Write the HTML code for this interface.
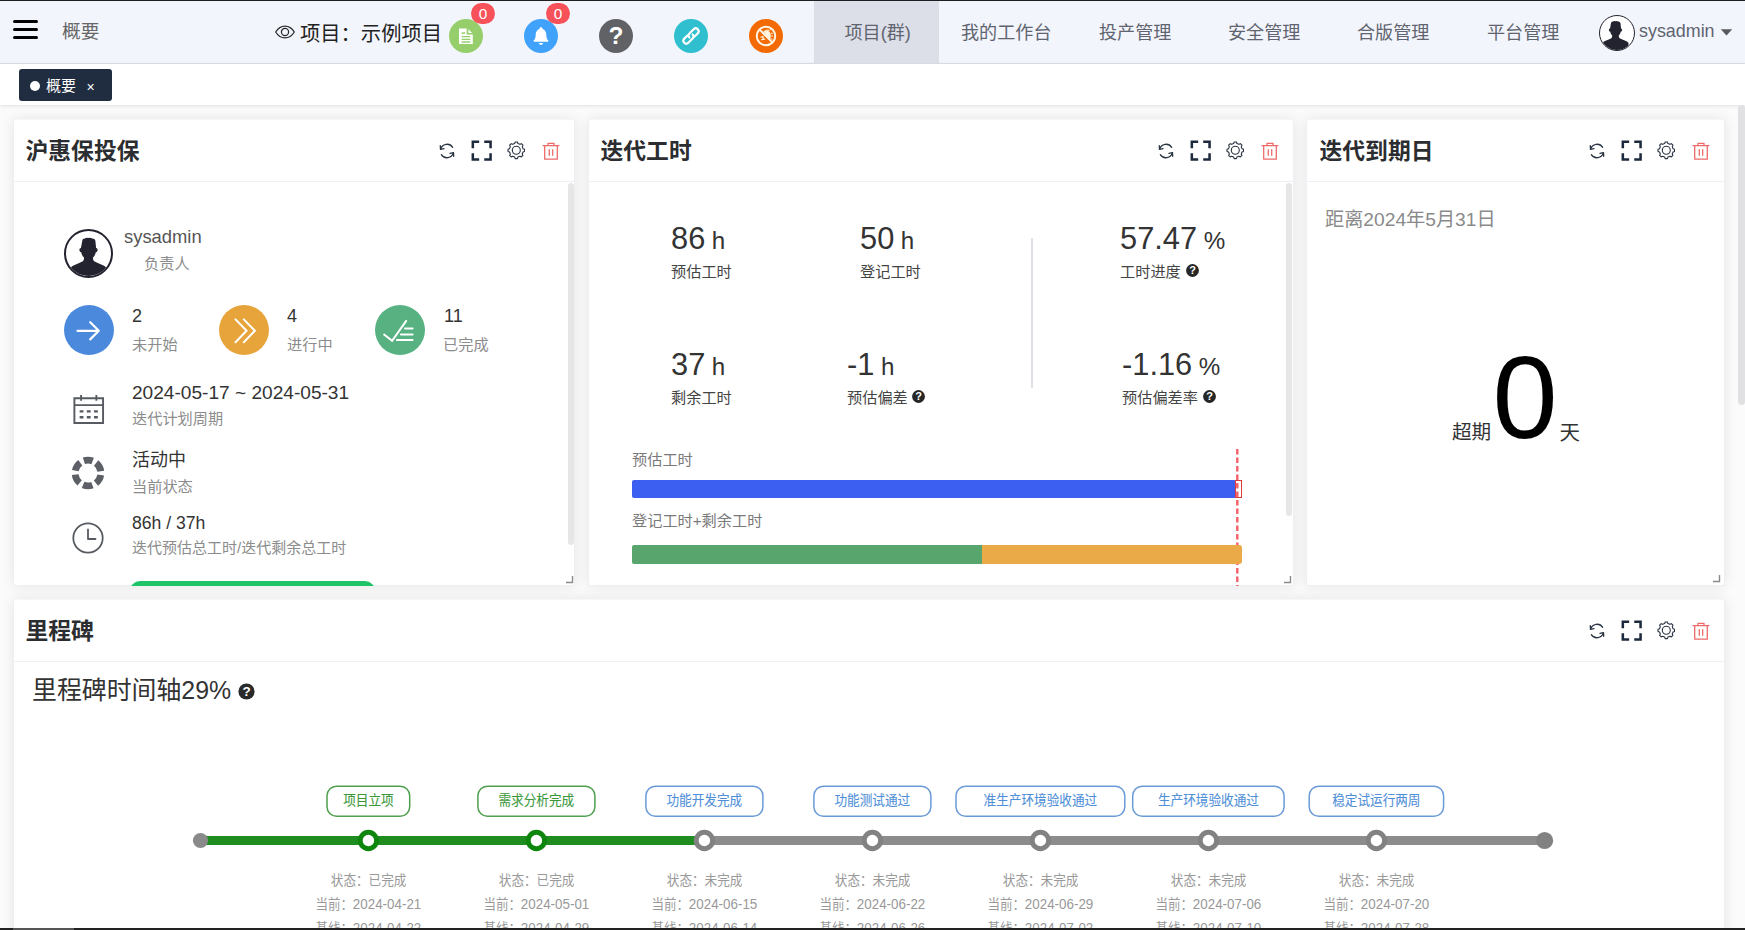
<!DOCTYPE html>
<html lang="zh-CN">
<head>
<meta charset="utf-8">
<title>概要</title>
<style>
*{box-sizing:border-box;margin:0;padding:0}
html,body{width:1745px;height:930px;overflow:hidden}
body{position:relative;background:#fbfbfb;font-family:"Liberation Sans","Noto Sans CJK SC",sans-serif;color:#333;-webkit-font-smoothing:antialiased}
.abs{position:absolute}
.t{position:absolute;white-space:nowrap;line-height:1}
#topline{left:0;top:0;width:1745px;height:1px;background:#1f1f22;z-index:50}
#botline{left:0;top:928px;width:1745px;height:2px;background:#222;z-index:50}
#botthumb{left:13px;top:928px;width:61px;height:2px;background:#555;z-index:51}
/* header */
#hdr{left:0;top:1px;width:1745px;height:62px;background:#f2f5fc}
#hdrline{left:0;top:63px;width:1745px;height:1px;background:#dfe1e6}
#tabbar{left:0;top:64px;width:1745px;height:41px;background:#fff;box-shadow:0 1px 4px rgba(0,21,41,.12)}
.bar{position:absolute;left:13px;width:25px;height:3.4px;border-radius:2px;background:#000}
#navact{left:814px;top:1px;width:125px;height:62px;background:#dcdfe8}
.nav{font-size:18.100px;color:#5f6470;top:23.500px}
.circ{position:absolute;width:34px;height:34px;border-radius:50%;top:19px}
.badge{position:absolute;width:24px;height:21.4px;border-radius:10.7px;background:#f7525a;color:#fff;font-size:15.400px;line-height:21.400px;text-align:center;top:2.8px}
#chip{left:19px;top:69px;width:93px;height:32px;border-radius:3px;background:#202d40}
/* cards */
.card{position:absolute;background:#fff;border-radius:3px;box-shadow:inset 1px 0 0 #edeff4,inset -1px 0 0 #edeff4,inset 0 -1px 0 #edeff4,inset 0 1px 0 #f6f7fa;overflow:hidden}
.cs{position:absolute;border-radius:3px;box-shadow:0 0 14px rgba(0,0,0,.09)}
.chead{position:absolute;left:0;top:0;right:0;height:63px;border-bottom:1px solid #eff0f4}
.ctitle{position:absolute;left:12.500px;top:20.500px;font-size:22.800px;font-weight:700;color:#2b2d30;line-height:1;white-space:nowrap}
.ico{position:absolute;top:22px;width:20px;height:20px}
#pgthumb{left:1738px;top:105px;width:7px;height:300px;background:#e1e1e4;border-radius:4px}
.sb{position:absolute;width:6px;border-radius:3px;background:#e6e6e6}
.lbl{position:absolute;white-space:nowrap;line-height:1;font-size:15.200px;color:#8c8c8c}
.lbl.k{color:#444;font-size:15.200px}
.val{position:absolute;white-space:nowrap;line-height:1;color:#333}
.gray{color:#8a8a8a}
.rh{position:absolute;width:10px;height:10px}
</style>
</head>
<body>
<div class="abs" id="topline"></div>
<div class="cs" style="left:13px;top:119px;width:562px;height:467px"></div>
<div class="cs" style="left:588px;top:119px;width:706px;height:467px"></div>
<div class="cs" style="left:1306px;top:119px;width:419px;height:467px"></div>
<div class="cs" style="left:13px;top:599px;width:1712px;height:340px"></div>
<div class="abs" id="hdr"></div>
<div class="abs" id="hdrline"></div>
<div class="abs" id="tabbar"></div>
<div class="abs" id="navact"></div>
<!-- hamburger -->
<div class="bar" style="top:20.1px"></div>
<div class="bar" style="top:27.8px"></div>
<div class="bar" style="top:35.5px"></div>
<span class="t" style="left:62px;top:23.200px;font-size:18.700px;color:#666">概要</span>
<!-- eye -->
<svg class="abs" style="left:274px;top:21.600px" width="22" height="20" viewBox="0 0 22 20"><path d="M1.700 10 C4.300 5.700 7.800 4.100 11 4.100 S17.700 5.700 20.300 10 C17.700 14.300 14.200 15.900 11 15.900 S4.300 14.300 1.700 10Z" fill="none" stroke="#2b2b2b" stroke-width="1.250"/><circle cx="11" cy="10" r="3.600" fill="none" stroke="#2b2b2b" stroke-width="1.250"/></svg>
<span class="t" style="left:300px;top:23.500px;font-size:20.300px;color:#222">项目：示例项目</span>
<!-- circles -->
<div class="circ" style="left:449px;background:#95ce6b"></div>
<svg class="abs" style="left:458px;top:28px" width="16" height="17" viewBox="0 0 16 17"><path d="M1 0.5H9.2L14.8 6V16H1Z" fill="#fff"/><path d="M9.2 0.5V6H14.8Z" fill="#95ce6b" stroke="#95ce6b" stroke-width="1.2"/><path d="M10.4 1.2L14.2 5H10.4Z" fill="#fff"/><path d="M3.6 5H7.2M3.6 8.6H12.2M3.6 11.4H12.2M3.6 14H12.2" stroke="#95ce6b" stroke-width="1.4"/></svg>
<div class="badge" style="left:471px">0</div>
<div class="circ" style="left:524px;background:#41a2fb"></div>
<svg class="abs" style="left:532px;top:26px" width="18" height="20" viewBox="0 0 18 20"><path d="M9 1.2c-.9 0-1.5.6-1.5 1.4v.5C5 3.9 3.7 6.100 3.700 8.700c0 3.200-.9 4.700-2 5.900-.3.400-.1 1.100.5 1.100h13.600c.6 0 .8-.7.500-1.100-1.100-1.200-2-2.700-2-5.900 0-2.600-1.300-4.800-3.800-5.600v-.5c0-.8-.6-1.400-1.500-1.400Z" fill="#fff"/><path d="M6.900 16.900h4.200c0 1.100-.9 1.900-2.100 1.900s-2.100-.8-2.100-1.900Z" fill="#fff"/></svg>
<div class="badge" style="left:546px">0</div>
<div class="circ" style="left:599px;background:#606266"></div>
<span class="t" style="left:608px;top:24.300px;font-size:24.500px;font-weight:700;color:#fff;width:16px;text-align:center">?</span>
<div class="circ" style="left:674px;background:#2fbfce"></div>
<svg class="abs" style="left:677px;top:22.400px" width="28" height="28" viewBox="-14 -14 28 28"><g transform="rotate(-45)" fill="none" stroke="#fff" stroke-width="2.200" stroke-linecap="round"><path d="M-2.100 -2.900H-6.650A2.900 2.900 0 0 0 -6.650 2.900H-0.650A2.900 2.900 0 0 0 2.250 0"/><path d="M2.100 2.900H6.650A2.900 2.900 0 0 0 6.650 -2.900H0.650A2.900 2.900 0 0 0 -2.250 0"/></g></svg>
<div class="circ" style="left:749px;background:#f46a02"></div>
<svg class="abs" style="left:754px;top:24px" width="24" height="24" viewBox="0 0 24 24"><circle cx="12" cy="12" r="9.250" fill="none" stroke="#fff6e6" stroke-width="2"/><path d="M9.500 7.500c1-1.500 3.600-1.700 5.200-.6 1.600 1.100 2.300 3.300 2.100 5.300-.1 1.500-.6 2.700-1.500 3.600Z" fill="#fff3dc"/><path d="M15.500 6.300l1.500-1M17 9.300h1.900M17.200 12h2M16.700 14.600l1.700.8M12.300 6.100h2.800" stroke="#fff3dc" stroke-width="1" fill="none"/><path d="M6.500 13.200l3.200-1M7.300 15.700l3.800-.6M8.600 13.100l1.300 2.600" stroke="#fff3dc" stroke-width="1.200" fill="none"/><path d="M5.400 5.400L18.600 18.600" stroke="#fff6e6" stroke-width="2"/></svg>
<!-- nav -->
<span class="t nav" style="left:844.500px">项目(群)</span>
<span class="t nav" style="left:961px">我的工作台</span>
<span class="t nav" style="left:1099px">投产管理</span>
<span class="t nav" style="left:1228px">安全管理</span>
<span class="t nav" style="left:1357px">合版管理</span>
<span class="t nav" style="left:1487px">平台管理</span>
<!-- avatar -->
<div class="abs" style="left:1598.700px;top:15.200px;width:36px;height:36px;border-radius:50%;border:1.800px solid #23232f;background:#fff;overflow:hidden"><svg class="abs" style="left:-2.500px;top:-2.500px" width="37" height="37" viewBox="0 0 37 37"><path d="M14 9.300Q14 7.600 15.800 7.600Q17 6.900 18.500 7.200Q20 6.900 21.200 7.600Q23.200 7.600 23.500 9.300L24 14.600Q25.300 14.800 25.100 16.200Q24.900 17.700 23.900 17.500Q23.300 20 21.800 21.400Q21.600 23.300 22.600 24.200Q26 26 29 27Q30.500 27.600 31.500 29V37H5.500V29Q6.500 27.600 8 27Q11 26 14.400 24.200Q15.400 23.300 15.200 21.400Q13.700 20 13.100 17.500Q12.100 17.700 11.900 16.200Q11.700 14.800 13 14.600Z" fill="#23232f"/></svg></div>
<span class="t" style="left:1639px;top:23.300px;font-size:17.900px;color:#5f6470">sysadmin</span>
<svg class="abs" style="left:1720px;top:28px" width="13" height="8" viewBox="0 0 13 8"><path d="M0.800 1.200H12.200L6.500 7.400Z" fill="#5a5a5e"/></svg>

<!-- CHIP -->
<div class="abs" id="chip"></div>
<div class="abs" style="left:30px;top:81px;width:10px;height:10px;border-radius:50%;background:#fff"></div>
<span class="t" style="left:46px;top:78px;font-size:15px;color:#fff">概要</span>
<span class="t" style="left:86.500px;top:80px;font-size:14px;color:#fff">×</span>
<!-- CARD1 -->
<div class="card" id="c1" style="left:13px;top:119px;width:562px;height:467px">
 <div class="chead"><span class="ctitle">沪惠保投保</span><svg class="ico" style="right:118px" width="20" height="20" viewBox="0 0 20 20" fill="none" stroke="#2a3442" stroke-width="1.3" stroke-linecap="round" stroke-linejoin="round"><path d="M3.6 8.300A6.700 6.700 0 0 1 15.700 6.300"/><path d="M16.400 11.700A6.700 6.700 0 0 1 4.300 13.700"/><path d="M3.300 4.700L3.500 8.400L7 7.600" /><path d="M16.700 15.300L16.500 11.600L13 12.400"/></svg>
<svg class="ico" style="right:81.700px;width:23.400px;height:23.400px;top:19.700px" viewBox="0 0 24 24" fill="none" stroke="#1d2a3d" stroke-width="2.600"><path d="M2.900 9.400V2.900H9.400M14.600 2.900H21.100V9.400M21.100 14.600V21.100H14.600M9.400 21.100H2.900V14.600"/></svg>
<svg class="ico" style="right:49.600px;top:22.300px;width:18.600px;height:18.600px" viewBox="0 0 20 20" fill="none" stroke="#2a3442" stroke-width="1.200" stroke-linejoin="round"><path d="M8.25 2.71 L8.80 1.08 L11.20 1.08 L11.75 2.71 L13.92 3.61 L15.46 2.85 L17.15 4.54 L16.39 6.08 L17.29 8.25 L18.92 8.80 L18.92 11.20 L17.29 11.75 L16.39 13.92 L17.15 15.46 L15.46 17.15 L13.92 16.39 L11.75 17.29 L11.20 18.92 L8.80 18.92 L8.25 17.29 L6.08 16.39 L4.54 17.15 L2.85 15.46 L3.61 13.92 L2.71 11.75 L1.08 11.20 L1.08 8.80 L2.71 8.25 L3.61 6.08 L2.85 4.54 L4.54 2.85 L6.08 3.61Z"/><circle cx="10" cy="10" r="4.300"/></svg>
<svg class="ico" style="right:14.200px;top:22px" width="20" height="20" viewBox="0 0 20 20" fill="none" stroke="#ee6a6a" stroke-width="1.300" stroke-linejoin="round"><path d="M1.600 4.700H18.400M7 4.500V2.400H13V4.500M3.700 4.900V18.200H16.300V4.900M8.300 8.300V14.700M11.700 8.300V14.700"/></svg>
</div>
 <div class="sb" style="left:555px;top:64px;height:362px"></div>
 <!-- avatar -->
 <div class="abs" style="left:50.600px;top:109.600px;width:49.900px;height:49.900px;border-radius:50%;border:2.070px solid #23232f;background:#fff;overflow:hidden"><svg class="abs" style="left:-2.690px;top:-2.690px" width="51" height="51" viewBox="0 0 37 37"><path d="M14 9.300Q14 7.600 15.800 7.600Q17 6.900 18.500 7.200Q20 6.900 21.200 7.600Q23.200 7.600 23.500 9.300L24 14.600Q25.300 14.800 25.100 16.200Q24.900 17.700 23.900 17.500Q23.300 20 21.800 21.400Q21.600 23.300 22.600 24.200Q26 26 29 27Q30.500 27.600 31.500 29V37H5.500V29Q6.500 27.600 8 27Q11 26 14.400 24.200Q15.400 23.300 15.200 21.400Q13.700 20 13.100 17.500Q12.100 17.700 11.900 16.200Q11.700 14.800 13 14.600Z" fill="#23232f"/></svg></div>
 <span class="val" style="left:111px;top:109px;font-size:18.400px;color:#555">sysadmin</span>
 <span class="lbl" style="left:131px;top:137px">负责人</span>
 <!-- status circles -->
 <div class="abs" style="left:50.500px;top:186px;width:50px;height:50px;border-radius:50%;background:#4b89dc"></div>
 <svg class="abs" style="left:60.500px;top:196.500px" width="29" height="29" viewBox="0 0 29 29" fill="none" stroke="#fff" stroke-width="2.200" stroke-linecap="round" stroke-linejoin="round"><path d="M3.500 14.800H24.500M16.200 6.200L24.800 14.800L16.200 23.400"/></svg>
 <span class="val" style="left:119px;top:187.500px;font-size:18px">2</span>
 <span class="lbl" style="left:119px;top:218px">未开始</span>
 <div class="abs" style="left:205.500px;top:186px;width:50px;height:50px;border-radius:50%;background:#e6a43a"></div>
 <svg class="abs" style="left:215.500px;top:196.500px" width="29" height="29" viewBox="0 0 29 29" fill="none" stroke="#fff" stroke-width="2" stroke-linecap="round" stroke-linejoin="round"><path d="M6.500 3.400L17.600 14.800L6.500 26.200M14.800 3.400L25.900 14.800L14.800 26.200"/></svg>
 <span class="val" style="left:274px;top:187.500px;font-size:18px">4</span>
 <span class="lbl" style="left:274px;top:218px">进行中</span>
 <div class="abs" style="left:361.500px;top:186px;width:50px;height:50px;border-radius:50%;background:#57b181"></div>
 <svg class="abs" style="left:371.500px;top:196.500px;overflow:visible" width="29" height="29" viewBox="0 0 29 29" fill="none" stroke="#fff" stroke-width="2" stroke-linecap="round" stroke-linejoin="miter"><path d="M-0.900 18.500L7.100 24.900L21.200 4.900M20 12.500H27.600M15.900 18.500H27.600M11.900 24.100H27.600"/></svg>
 <span class="val" style="left:431px;top:187.500px;font-size:18px">11</span>
 <span class="lbl" style="left:430px;top:218px">已完成</span>
 <!-- calendar -->
 <svg class="abs" style="left:59px;top:273.500px" width="32.500" height="33" viewBox="0 0 34 34" preserveAspectRatio="none" fill="none" stroke="#575b61" stroke-width="2"><path d="M2.500 5.500H32.500V31H2.500ZM2.500 12.500H32.500M9.500 2V8M25.500 2V8"/><path d="M8 19H12M15.500 19H19.500M23 19H27M8 25H12M15.500 25H19.500M23 25H27" stroke-width="2.400"/></svg>
 <span class="val" style="left:119px;top:263.500px;font-size:19.100px">2024-05-17 ~ 2024-05-31</span>
 <span class="lbl" style="left:119px;top:292px">迭代计划周期</span>
 <!-- status ring -->
 <svg class="abs" style="left:57px;top:336px" width="36" height="36" viewBox="0 0 36 36" fill="none"><circle cx="18" cy="18" r="12.900" stroke="#5d6066" stroke-width="6.800" stroke-dasharray="9.500 4.010" stroke-dashoffset="4.750" transform="rotate(-90 18 18)"/></svg>
 <span class="val" style="left:119px;top:332px;font-size:18px">活动中</span>
 <span class="lbl" style="left:119px;top:360px">当前状态</span>
 <!-- clock -->
 <svg class="abs" style="left:57px;top:401px" width="36" height="36" viewBox="0 0 36 36" fill="none" stroke="#575b61" stroke-width="1.800" stroke-linecap="round" stroke-linejoin="round"><circle cx="18" cy="18" r="14.700"/><path d="M18 9.500V19H25.500"/></svg>
 <span class="val" style="left:119px;top:395.500px;font-size:17.600px">86h / 37h</span>
 <span class="lbl" style="left:119px;top:420.700px;font-size:15px">迭代预估总工时/迭代剩余总工时</span>
 <!-- progress -->
 <div class="abs" style="left:117px;top:461.500px;width:245px;height:20px;border-radius:10px;background:#1fc468"></div>
 <svg class="rh" style="left:552px;top:456px" viewBox="0 0 10 10"><path d="M7.500 1V7.500H1" fill="none" stroke="#8a8a8a" stroke-width="1.400"/></svg>
</div>
<!-- CARD2 -->
<div class="card" id="c2" style="left:588px;top:119px;width:706px;height:467px">
 <div class="chead"><span class="ctitle">迭代工时</span><svg class="ico" style="right:118px" width="20" height="20" viewBox="0 0 20 20" fill="none" stroke="#2a3442" stroke-width="1.3" stroke-linecap="round" stroke-linejoin="round"><path d="M3.6 8.300A6.700 6.700 0 0 1 15.700 6.300"/><path d="M16.400 11.700A6.700 6.700 0 0 1 4.300 13.700"/><path d="M3.300 4.700L3.500 8.400L7 7.600" /><path d="M16.700 15.300L16.500 11.600L13 12.400"/></svg>
<svg class="ico" style="right:81.700px;width:23.400px;height:23.400px;top:19.700px" viewBox="0 0 24 24" fill="none" stroke="#1d2a3d" stroke-width="2.600"><path d="M2.900 9.400V2.900H9.400M14.600 2.900H21.100V9.400M21.100 14.600V21.100H14.600M9.400 21.100H2.900V14.600"/></svg>
<svg class="ico" style="right:49.600px;top:22.300px;width:18.600px;height:18.600px" viewBox="0 0 20 20" fill="none" stroke="#2a3442" stroke-width="1.200" stroke-linejoin="round"><path d="M8.25 2.71 L8.80 1.08 L11.20 1.08 L11.75 2.71 L13.92 3.61 L15.46 2.85 L17.15 4.54 L16.39 6.08 L17.29 8.25 L18.92 8.80 L18.92 11.20 L17.29 11.75 L16.39 13.92 L17.15 15.46 L15.46 17.15 L13.92 16.39 L11.75 17.29 L11.20 18.92 L8.80 18.92 L8.25 17.29 L6.08 16.39 L4.54 17.15 L2.85 15.46 L3.61 13.92 L2.71 11.75 L1.08 11.20 L1.08 8.80 L2.71 8.25 L3.61 6.08 L2.85 4.54 L4.54 2.85 L6.08 3.61Z"/><circle cx="10" cy="10" r="4.300"/></svg>
<svg class="ico" style="right:14.200px;top:22px" width="20" height="20" viewBox="0 0 20 20" fill="none" stroke="#ee6a6a" stroke-width="1.300" stroke-linejoin="round"><path d="M1.600 4.700H18.400M7 4.500V2.400H13V4.500M3.700 4.900V18.200H16.300V4.900M8.300 8.300V14.700M11.700 8.300V14.700"/></svg>
</div>
 <div class="sb" style="left:698px;top:64px;height:333px"></div>
 <span class="val" style="left:83px;top:105px;font-size:30.800px">86 <span style="font-size:24.200px;margin-left:-2px">h</span></span>
 <span class="lbl k" style="left:83px;top:144.500px">预估工时</span>
 <span class="val" style="left:272px;top:105px;font-size:30.800px">50 <span style="font-size:24.200px;margin-left:-2px">h</span></span>
 <span class="lbl k" style="left:272px;top:144.500px">登记工时</span>
 <div class="abs" style="left:442.500px;top:119px;width:2px;height:150px;background:#dcdfe6"></div>
 <span class="val" style="left:532px;top:105px;font-size:30.800px">57.47 <span style="font-size:24.200px;margin-left:-2px">%</span></span>
 <span class="lbl k" style="left:532px;top:144.500px">工时进度</span>
 <svg class="abs q" style="left:598px;top:145.200px" width="13" height="13" viewBox="0 0 13 13"><circle cx="6.500" cy="6.500" r="6.400" fill="#262626"/><text x="6.500" y="10.300" font-size="11" font-weight="700" fill="#fff" text-anchor="middle" font-family="Liberation Sans, sans-serif">?</text></svg>
 <span class="val" style="left:83px;top:230.500px;font-size:30.800px">37 <span style="font-size:24.200px;margin-left:-2px">h</span></span>
 <span class="lbl k" style="left:83px;top:271px">剩余工时</span>
 <span class="val" style="left:259px;top:230.500px;font-size:30.800px">-1 <span style="font-size:24.200px;margin-left:-2px">h</span></span>
 <span class="lbl k" style="left:259px;top:271px">预估偏差</span>
 <svg class="abs q" style="left:324.300px;top:270.600px" width="13" height="13" viewBox="0 0 13 13"><circle cx="6.500" cy="6.500" r="6.400" fill="#262626"/><text x="6.500" y="10.300" font-size="11" font-weight="700" fill="#fff" text-anchor="middle" font-family="Liberation Sans, sans-serif">?</text></svg>
 <span class="val" style="left:534px;top:230.500px;font-size:30.800px">-1.16 <span style="font-size:24.200px;margin-left:-2px">%</span></span>
 <span class="lbl k" style="left:534px;top:271px">预估偏差率</span>
 <svg class="abs q" style="left:615px;top:270.600px" width="13" height="13" viewBox="0 0 13 13"><circle cx="6.500" cy="6.500" r="6.400" fill="#262626"/><text x="6.500" y="10.300" font-size="11" font-weight="700" fill="#fff" text-anchor="middle" font-family="Liberation Sans, sans-serif">?</text></svg>
 <!-- bars -->
 <span class="lbl" style="left:44px;top:333px;color:#7a7a7a">预估工时</span>
 <div class="abs" style="left:44px;top:361px;width:604px;height:18px;border-radius:2px;background:#3c5ff2"></div>
 <div class="abs" style="left:647px;top:361px;width:6.500px;height:18px;border:1px solid #e03a3a;background:#fff"></div>
 <svg class="abs" style="left:647px;top:330px" width="5" height="137" viewBox="0 0 5 137"><path d="M2.300 0V137" stroke="#f2606a" stroke-width="2.400" stroke-dasharray="5.500 3"/></svg>
 <span class="lbl" style="left:44px;top:394px;color:#7a7a7a">登记工时+剩余工时</span>
 <div class="abs" style="left:44px;top:425.500px;width:350px;height:19px;border-radius:2px 0 0 2px;background:#58a56e"></div>
 <div class="abs" style="left:394px;top:425.500px;width:259.500px;height:19px;border-radius:0 3px 3px 0;background:#ebaa48"></div>
 <svg class="rh" style="left:695px;top:456px" viewBox="0 0 10 10"><path d="M7.500 1V7.500H1" fill="none" stroke="#8a8a8a" stroke-width="1.400"/></svg>
</div>
<!-- CARD3 -->
<div class="card" id="c3" style="left:1306px;top:119px;width:419px;height:467px">
 <div class="chead"><span class="ctitle" style="left:13.500px">迭代到期日</span><svg class="ico" style="right:118px" width="20" height="20" viewBox="0 0 20 20" fill="none" stroke="#2a3442" stroke-width="1.3" stroke-linecap="round" stroke-linejoin="round"><path d="M3.6 8.300A6.700 6.700 0 0 1 15.700 6.300"/><path d="M16.400 11.700A6.700 6.700 0 0 1 4.300 13.700"/><path d="M3.300 4.700L3.500 8.400L7 7.600" /><path d="M16.700 15.300L16.500 11.600L13 12.400"/></svg>
<svg class="ico" style="right:81.700px;width:23.400px;height:23.400px;top:19.700px" viewBox="0 0 24 24" fill="none" stroke="#1d2a3d" stroke-width="2.600"><path d="M2.900 9.400V2.900H9.400M14.600 2.900H21.100V9.400M21.100 14.600V21.100H14.600M9.400 21.100H2.900V14.600"/></svg>
<svg class="ico" style="right:49.600px;top:22.300px;width:18.600px;height:18.600px" viewBox="0 0 20 20" fill="none" stroke="#2a3442" stroke-width="1.200" stroke-linejoin="round"><path d="M8.25 2.71 L8.80 1.08 L11.20 1.08 L11.75 2.71 L13.92 3.61 L15.46 2.85 L17.15 4.54 L16.39 6.08 L17.29 8.25 L18.92 8.80 L18.92 11.20 L17.29 11.75 L16.39 13.92 L17.15 15.46 L15.46 17.15 L13.92 16.39 L11.75 17.29 L11.20 18.92 L8.80 18.92 L8.25 17.29 L6.08 16.39 L4.54 17.15 L2.85 15.46 L3.61 13.92 L2.71 11.75 L1.08 11.20 L1.08 8.80 L2.71 8.25 L3.61 6.08 L2.85 4.54 L4.54 2.85 L6.08 3.61Z"/><circle cx="10" cy="10" r="4.300"/></svg>
<svg class="ico" style="right:14.200px;top:22px" width="20" height="20" viewBox="0 0 20 20" fill="none" stroke="#ee6a6a" stroke-width="1.300" stroke-linejoin="round"><path d="M1.600 4.700H18.400M7 4.500V2.400H13V4.500M3.700 4.900V18.200H16.300V4.900M8.300 8.300V14.700M11.700 8.300V14.700"/></svg>
</div>
 <span class="t" style="left:19px;top:91.300px;font-size:19.200px;color:#8a8a8a">距离2024年5月31日</span>
 <span class="t" style="left:146px;top:304px;font-size:19.600px;color:#333">超期</span>
 <span class="t" style="left:186.400px;top:220.200px;font-size:117px;color:#000">0</span>
 <span class="t" style="left:253.500px;top:303.500px;font-size:20.500px;color:#333">天</span>
 <svg class="rh" style="left:406px;top:455px" viewBox="0 0 10 10"><path d="M7.500 1V7.500H1" fill="none" stroke="#8a8a8a" stroke-width="1.400"/></svg>
</div>
<!-- CARD4 -->
<div class="card" id="c4" style="left:13px;top:599px;width:1712px;height:340px">
 <div class="chead"><span class="ctitle">里程碑</span><svg class="ico" style="right:118px" width="20" height="20" viewBox="0 0 20 20" fill="none" stroke="#2a3442" stroke-width="1.3" stroke-linecap="round" stroke-linejoin="round"><path d="M3.6 8.300A6.700 6.700 0 0 1 15.700 6.300"/><path d="M16.400 11.700A6.700 6.700 0 0 1 4.300 13.700"/><path d="M3.300 4.700L3.500 8.400L7 7.600" /><path d="M16.700 15.300L16.500 11.600L13 12.400"/></svg>
<svg class="ico" style="right:81.700px;width:23.400px;height:23.400px;top:19.700px" viewBox="0 0 24 24" fill="none" stroke="#1d2a3d" stroke-width="2.600"><path d="M2.900 9.400V2.900H9.400M14.600 2.900H21.100V9.400M21.100 14.600V21.100H14.600M9.400 21.100H2.900V14.600"/></svg>
<svg class="ico" style="right:49.600px;top:22.300px;width:18.600px;height:18.600px" viewBox="0 0 20 20" fill="none" stroke="#2a3442" stroke-width="1.200" stroke-linejoin="round"><path d="M8.25 2.71 L8.80 1.08 L11.20 1.08 L11.75 2.71 L13.92 3.61 L15.46 2.85 L17.15 4.54 L16.39 6.08 L17.29 8.25 L18.92 8.80 L18.92 11.20 L17.29 11.75 L16.39 13.92 L17.15 15.46 L15.46 17.15 L13.92 16.39 L11.75 17.29 L11.20 18.92 L8.80 18.92 L8.25 17.29 L6.08 16.39 L4.54 17.15 L2.85 15.46 L3.61 13.92 L2.71 11.75 L1.08 11.20 L1.08 8.80 L2.71 8.25 L3.61 6.08 L2.85 4.54 L4.54 2.85 L6.08 3.61Z"/><circle cx="10" cy="10" r="4.300"/></svg>
<svg class="ico" style="right:14.200px;top:22px" width="20" height="20" viewBox="0 0 20 20" fill="none" stroke="#ee6a6a" stroke-width="1.300" stroke-linejoin="round"><path d="M1.600 4.700H18.400M7 4.500V2.400H13V4.500M3.700 4.900V18.200H16.300V4.900M8.300 8.300V14.700M11.700 8.300V14.700"/></svg>
</div>
 <span class="t" style="left:19px;top:79.300px;font-size:24.900px;color:#333">里程碑时间轴29%</span>
 <svg class="abs" style="left:225px;top:84px" width="17" height="17" viewBox="0 0 17 17"><circle cx="8.500" cy="8.500" r="8.100" fill="#2a2a2a"/><text x="8.500" y="13.300" font-size="13.500" font-weight="700" fill="#fff" text-anchor="middle" font-family="Liberation Sans, sans-serif">?</text></svg>
 <svg class="abs" style="left:0;top:0" width="1712" height="331" viewBox="13 599 1712 331" font-family="Liberation Sans, Noto Sans CJK SC, sans-serif">
  <path d="M704.400 840.5 H1544.600" stroke="#8c8c8c" stroke-width="9"/>
  <path d="M200.500 840.5 H704.400" stroke="#1f8c1f" stroke-width="9"/>
  <circle cx="200.500" cy="840.5" r="7.600" fill="#8a8a8a"/>
  <circle cx="1544.600" cy="840.5" r="8.600" fill="#828282"/>
  <circle cx="368.4" cy="840.5" r="8.200" fill="#fff" stroke="#0e860e" stroke-width="4.900"/>
  <rect x="327.0" y="786.200" width="82.7" height="30" rx="9.500" fill="#fff" stroke="#4ea04e" stroke-width="1.500"/>
  <text x="343.2" y="805.100" font-size="13.500" stroke-width="0.100" fill="#3a983a" stroke="#3a983a" textLength="50.5" lengthAdjust="spacingAndGlyphs">项目立项</text>
  <g font-size="13.500" fill="#999">
   <text x="330.8" y="884.800" textLength="75.600" lengthAdjust="spacingAndGlyphs">状态：已完成</text>
   <text x="315.5" y="908.900" textLength="37.600" lengthAdjust="spacingAndGlyphs">当前：</text><text x="352.8" y="908.900" textLength="68.500" font-size="14.300" lengthAdjust="spacingAndGlyphs">2024-04-21</text>
   <text x="315.5" y="933.100" textLength="37.600" lengthAdjust="spacingAndGlyphs">基线：</text><text x="352.8" y="933.100" textLength="68.500" font-size="14.300" lengthAdjust="spacingAndGlyphs">2024-04-22</text>
  </g>
  <circle cx="536.4" cy="840.5" r="8.200" fill="#fff" stroke="#0e860e" stroke-width="4.900"/>
  <rect x="477.9" y="786.200" width="117.0" height="30" rx="9.500" fill="#fff" stroke="#4ea04e" stroke-width="1.500"/>
  <text x="498.5" y="805.100" font-size="13.500" stroke-width="0.100" fill="#3a983a" stroke="#3a983a" textLength="75.7" lengthAdjust="spacingAndGlyphs">需求分析完成</text>
  <g font-size="13.500" fill="#999">
   <text x="498.8" y="884.800" textLength="75.600" lengthAdjust="spacingAndGlyphs">状态：已完成</text>
   <text x="483.5" y="908.900" textLength="37.600" lengthAdjust="spacingAndGlyphs">当前：</text><text x="520.8" y="908.900" textLength="68.500" font-size="14.300" lengthAdjust="spacingAndGlyphs">2024-05-01</text>
   <text x="483.5" y="933.100" textLength="37.600" lengthAdjust="spacingAndGlyphs">基线：</text><text x="520.8" y="933.100" textLength="68.500" font-size="14.300" lengthAdjust="spacingAndGlyphs">2024-04-29</text>
  </g>
  <circle cx="704.4" cy="840.5" r="8.200" fill="#fff" stroke="#828282" stroke-width="4.900"/>
  <rect x="645.9" y="786.200" width="117.0" height="30" rx="9.500" fill="#fff" stroke="#6a9bd8" stroke-width="1.500"/>
  <text x="666.5" y="805.100" font-size="13.500" stroke-width="0.100" fill="#4f8fd8" stroke="#4f8fd8" textLength="75.7" lengthAdjust="spacingAndGlyphs">功能开发完成</text>
  <g font-size="13.500" fill="#999">
   <text x="666.8" y="884.800" textLength="75.600" lengthAdjust="spacingAndGlyphs">状态：未完成</text>
   <text x="651.5" y="908.900" textLength="37.600" lengthAdjust="spacingAndGlyphs">当前：</text><text x="688.8" y="908.900" textLength="68.500" font-size="14.300" lengthAdjust="spacingAndGlyphs">2024-06-15</text>
   <text x="651.5" y="933.100" textLength="37.600" lengthAdjust="spacingAndGlyphs">基线：</text><text x="688.8" y="933.100" textLength="68.500" font-size="14.300" lengthAdjust="spacingAndGlyphs">2024-06-14</text>
  </g>
  <circle cx="872.4" cy="840.5" r="8.200" fill="#fff" stroke="#828282" stroke-width="4.900"/>
  <rect x="813.9" y="786.200" width="117.0" height="30" rx="9.500" fill="#fff" stroke="#6a9bd8" stroke-width="1.500"/>
  <text x="834.5" y="805.100" font-size="13.500" stroke-width="0.100" fill="#4f8fd8" stroke="#4f8fd8" textLength="75.7" lengthAdjust="spacingAndGlyphs">功能测试通过</text>
  <g font-size="13.500" fill="#999">
   <text x="834.8" y="884.800" textLength="75.600" lengthAdjust="spacingAndGlyphs">状态：未完成</text>
   <text x="819.5" y="908.900" textLength="37.600" lengthAdjust="spacingAndGlyphs">当前：</text><text x="856.8" y="908.900" textLength="68.500" font-size="14.300" lengthAdjust="spacingAndGlyphs">2024-06-22</text>
   <text x="819.5" y="933.100" textLength="37.600" lengthAdjust="spacingAndGlyphs">基线：</text><text x="856.8" y="933.100" textLength="68.500" font-size="14.300" lengthAdjust="spacingAndGlyphs">2024-06-26</text>
  </g>
  <circle cx="1040.4" cy="840.5" r="8.200" fill="#fff" stroke="#828282" stroke-width="4.900"/>
  <rect x="956.0" y="786.200" width="168.8" height="30" rx="9.500" fill="#fff" stroke="#6a9bd8" stroke-width="1.500"/>
  <text x="983.6" y="805.100" font-size="13.500" stroke-width="0.100" fill="#4f8fd8" stroke="#4f8fd8" textLength="113.6" lengthAdjust="spacingAndGlyphs">准生产环境验收通过</text>
  <g font-size="13.500" fill="#999">
   <text x="1002.8" y="884.800" textLength="75.600" lengthAdjust="spacingAndGlyphs">状态：未完成</text>
   <text x="987.5" y="908.900" textLength="37.600" lengthAdjust="spacingAndGlyphs">当前：</text><text x="1024.8" y="908.900" textLength="68.500" font-size="14.300" lengthAdjust="spacingAndGlyphs">2024-06-29</text>
   <text x="987.5" y="933.100" textLength="37.600" lengthAdjust="spacingAndGlyphs">基线：</text><text x="1024.8" y="933.100" textLength="68.500" font-size="14.300" lengthAdjust="spacingAndGlyphs">2024-07-02</text>
  </g>
  <circle cx="1208.4" cy="840.5" r="8.200" fill="#fff" stroke="#828282" stroke-width="4.900"/>
  <rect x="1132.7" y="786.200" width="151.4" height="30" rx="9.500" fill="#fff" stroke="#6a9bd8" stroke-width="1.500"/>
  <text x="1157.9" y="805.100" font-size="13.500" stroke-width="0.100" fill="#4f8fd8" stroke="#4f8fd8" textLength="101.0" lengthAdjust="spacingAndGlyphs">生产环境验收通过</text>
  <g font-size="13.500" fill="#999">
   <text x="1170.8" y="884.800" textLength="75.600" lengthAdjust="spacingAndGlyphs">状态：未完成</text>
   <text x="1155.5" y="908.900" textLength="37.600" lengthAdjust="spacingAndGlyphs">当前：</text><text x="1192.8" y="908.900" textLength="68.500" font-size="14.300" lengthAdjust="spacingAndGlyphs">2024-07-06</text>
   <text x="1155.5" y="933.100" textLength="37.600" lengthAdjust="spacingAndGlyphs">基线：</text><text x="1192.8" y="933.100" textLength="68.500" font-size="14.300" lengthAdjust="spacingAndGlyphs">2024-07-10</text>
  </g>
  <circle cx="1376.4" cy="840.5" r="8.200" fill="#fff" stroke="#828282" stroke-width="4.900"/>
  <rect x="1309.2" y="786.200" width="134.4" height="30" rx="9.500" fill="#fff" stroke="#6a9bd8" stroke-width="1.500"/>
  <text x="1332.2" y="805.100" font-size="13.500" stroke-width="0.100" fill="#4f8fd8" stroke="#4f8fd8" textLength="88.3" lengthAdjust="spacingAndGlyphs">稳定试运行两周</text>
  <g font-size="13.500" fill="#999">
   <text x="1338.8" y="884.800" textLength="75.600" lengthAdjust="spacingAndGlyphs">状态：未完成</text>
   <text x="1323.5" y="908.900" textLength="37.600" lengthAdjust="spacingAndGlyphs">当前：</text><text x="1360.8" y="908.900" textLength="68.500" font-size="14.300" lengthAdjust="spacingAndGlyphs">2024-07-20</text>
   <text x="1323.5" y="933.100" textLength="37.600" lengthAdjust="spacingAndGlyphs">基线：</text><text x="1360.8" y="933.100" textLength="68.500" font-size="14.300" lengthAdjust="spacingAndGlyphs">2024-07-28</text>
  </g>
 </svg>
</div>
<div class="abs" id="botline"></div>
<div class="abs" id="botthumb"></div>
<div class="abs" id="pgthumb"></div>
</body>
</html>
